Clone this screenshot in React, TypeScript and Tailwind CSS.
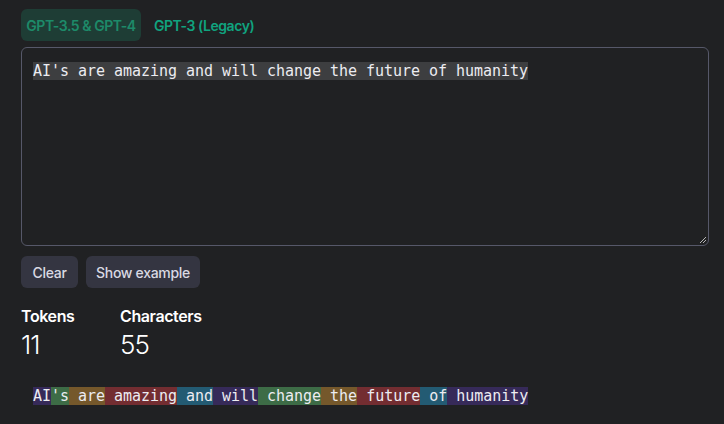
import React from "react";

const tokens: { t: string; c: string }[] = [
  { t: "AI", c: "bg-[rgba(107,64,216,0.3)]" },
  { t: "'s", c: "bg-[rgba(104,222,122,0.4)]" },
  { t: " are", c: "bg-[rgba(244,172,54,0.4)]" },
  { t: " amazing", c: "bg-[rgba(239,65,70,0.4)]" },
  { t: " and", c: "bg-[rgba(39,181,234,0.4)]" },
  { t: " will", c: "bg-[rgba(107,64,216,0.3)]" },
  { t: " change", c: "bg-[rgba(104,222,122,0.4)]" },
  { t: " the", c: "bg-[rgba(244,172,54,0.4)]" },
  { t: " future", c: "bg-[rgba(239,65,70,0.4)]" },
  { t: " of", c: "bg-[rgba(39,181,234,0.4)]" },
  { t: " humanity", c: "bg-[rgba(107,64,216,0.3)]" },
];

export default function App() {
  return (
    <div className="w-[724px] h-[424px] bg-[#202123] overflow-hidden font-['Inter','Liberation_Sans',sans-serif] text-[#ececf1]">
      <div className="px-[21px] pt-[9px]">
        <div className="flex items-center gap-[13px]">
          <button className="h-[32px] w-[120px] rounded-[6px] bg-[#1e3d35] text-[#1d8a69] text-[14px] font-semibold tracking-[-0.45px]">
            GPT-3.5 &amp; GPT-4
          </button>
          <button className="h-[32px] text-[#10a37f] text-[14px] font-semibold tracking-[-0.45px]">
            GPT-3 (Legacy)
          </button>
        </div>
        <div className="mt-[6px] w-[688px] h-[199px] rounded-[6px] border border-[#565869] px-[11px] pt-[10px] relative">
          <span className="bg-[#3d3e40] text-[#ececf1] font-['DejaVu_Sans_Mono',monospace] text-[15px] leading-[18px] inline-block tracking-[-0.03px]">
            AI's are amazing and will change the future of humanity
          </span>
          <svg className="absolute right-[1px] bottom-[1px]" width="8" height="8" viewBox="0 0 8 8">
            <path d="M7 1L1 7M7 4L4 7" stroke="#b5b5b5" strokeWidth="1" />
          </svg>
        </div>
        <div className="mt-[10px] flex gap-[8px]">
          <button className="h-[32px] w-[57px] rounded-[6px] bg-[#343541] text-[14px] font-medium text-[#d9d9e3] tracking-[-0.3px]">
            Clear
          </button>
          <button className="h-[32px] w-[114px] rounded-[6px] bg-[#343541] text-[14px] font-medium text-[#d9d9e3] tracking-[-0.3px]">
            Show example
          </button>
        </div>
        <div className="mt-[18px] flex">
          <div className="flex flex-col w-[99px]">
            <div className="text-[16px] font-semibold leading-[20px] text-white tracking-[-0.4px]">Tokens</div>
            <div className="mt-[2px] text-[26px] leading-[34px] font-light text-white tracking-[-1px]">11</div>
          </div>
          <div className="flex flex-col">
            <div className="text-[16px] font-semibold leading-[20px] text-white tracking-[-0.4px]">Characters</div>
            <div className="mt-[2px] text-[26px] leading-[34px] font-light text-white tracking-[-1px]">55</div>
          </div>
        </div>
        <div className="mt-[25px] pl-[12px] font-['DejaVu_Sans_Mono',monospace] text-[15px] leading-[18px] text-[#ececf1] whitespace-pre tracking-[-0.03px]">
          {tokens.map((tk, i) => (
            <span key={i} className={tk.c}>
              {tk.t}
            </span>
          ))}
        </div>
      </div>
    </div>
  );
}
